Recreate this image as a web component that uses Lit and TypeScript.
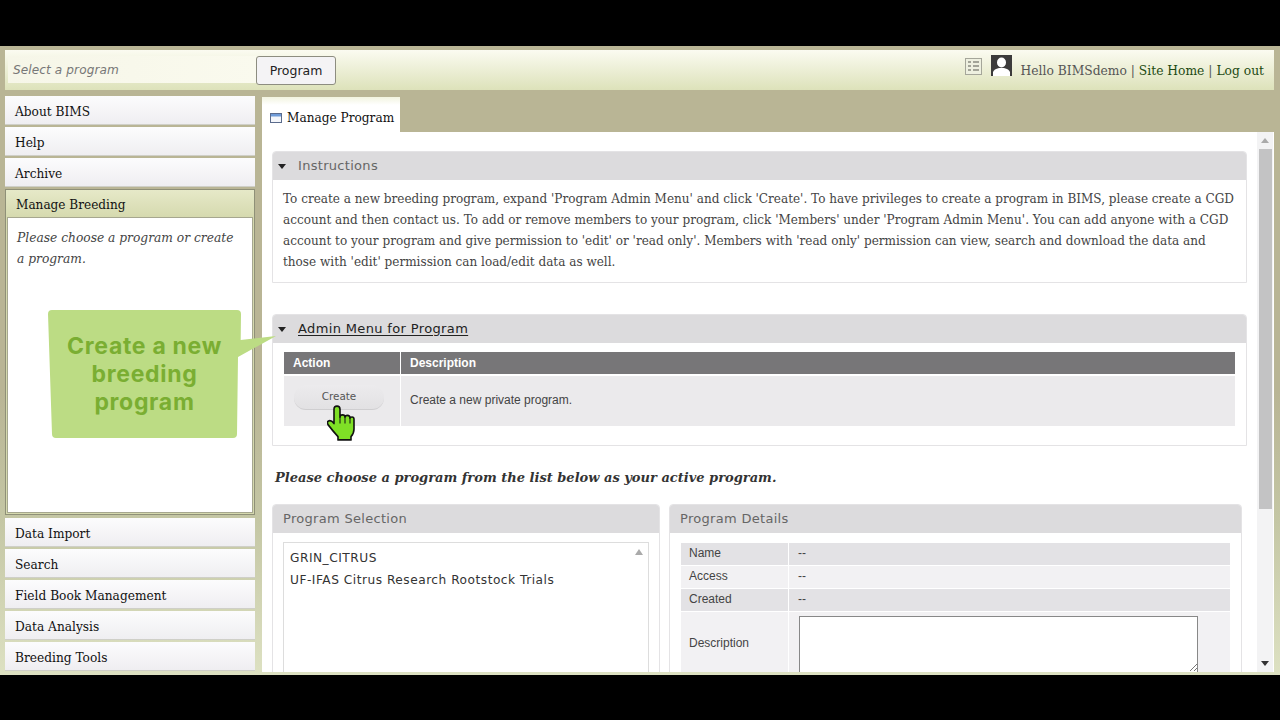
import { LitElement, html, css } from "lit";
import { customElement } from "lit/decorators.js";

const SERIF = css`"DejaVu Serif", "Liberation Serif", serif`;

@customElement("app-root")
export class AppRoot extends LitElement {
  static styles = css`
    :host { display: block; width: 1280px; height: 720px; background: #000; overflow: hidden; position: relative; font-family: ${SERIF}; }
    * { box-sizing: border-box; }
    .frame { margin-top: 46px; height: 629px; width: 1280px; background: linear-gradient(#b9b595 0, #b9b595 55%, #c4c6a4 75%, #dde1c2 100%); display: flex; flex-direction: column; padding: 4px 6px 3px 5px; }
    .top { height: 40px; flex: none; background: linear-gradient(#fbfbf1, #dde2ba); display: flex; align-items: center; position: relative; padding-left: 3px; }
    .select { width: 248px; height: 27px; margin-top: -1px; background: linear-gradient(90deg, #f6f6e8, #fafaee); color: #777; font: italic 12.1px "DejaVu Sans", sans-serif; padding: 7px 5px 0; letter-spacing: .1px; }
    .pbtn { width: 80px; height: 29px; background: #f4f3f5; border: 1px solid #8d8d80; border-radius: 3px; color: #222; font: 12.5px "DejaVu Sans", sans-serif; display: flex; align-items: center; justify-content: center; }
    .user { margin-left: auto; display: flex; align-items: flex-end; padding-right: 10px; height: 100%; padding-bottom: 12px; font-size: 12.3px; color: #555; white-space: pre; }
    .user a { color: #1d4a12; }
    .user .ic1 { margin: 8px 9px 0 0; align-self: flex-start; }
    .user .ic2 { margin: 5px 9px 0 0; align-self: flex-start; }
    .cols { flex: 1; min-height: 0; display: flex; margin-top: 6px; }
    .side { width: 250px; flex: none; display: flex; flex-direction: column; gap: 2px; overflow: hidden; }
    .item { height: 29px; flex: none; background: linear-gradient(#fcfcfd, #efeef1); border-bottom: 1px solid #cfcfc8; padding: 9px 0 0 10px; font-size: 12.2px; color: #111; white-space: nowrap; }
    .open { height: 326px; flex: none; background: linear-gradient(#e6e9c8 0, #d5d9ae 28px); border: 1px solid #8f9078; display: flex; flex-direction: column; padding: 0 1px 1px; margin-bottom: 1px; }
    .open .h { height: 27px; padding: 8px 0 0 9px; font-size: 12.1px; color: #111; }
    .open .b { flex: 1; background: #fff; border: 1px solid #a6a78f; padding: 10px 9px; font-style: italic; font-size: 12.25px; line-height: 21px; color: #444; }
    .main { flex: 1; min-width: 0; margin-left: 7px; display: flex; flex-direction: column; }
    .tab { width: 138px; height: 35px; margin-top: 1px; flex: none; background: linear-gradient(#f2f4e0, #fff 8px); display: flex; align-items: center; gap: 5px; padding: 7px 0 0 8px; font-size: 12.15px; color: #111; white-space: nowrap; }
    .pane { flex: 1; min-height: 0; background: #fff; position: relative; display: flex; overflow: hidden; }
    .content { flex: 1; min-width: 0; padding: 19px 0 0 10px; overflow: hidden; }
    .panel { width: 975px; border: 1px solid #e4e3e5; border-radius: 4px 4px 0 0; background: #fff; }
    .phead { height: 28px; padding-bottom: 2px; background: #dcdbdd; display: flex; align-items: center; font: 13px "DejaVu Sans", sans-serif; color: #666; padding-left: 5px; letter-spacing: .3px; border-radius: 3px 3px 0 0; }
    .phead svg { margin: 2px 12px 0 0; }
    .phead.dark { color: #222; letter-spacing: .36px; }
    .phead u { text-underline-offset: 2px; }
    .instr { height: 132px; }
    .instr p { margin: 0; padding: 9px 10px; font-size: 12.06px; line-height: 21px; color: #444; white-space: nowrap; }
    .admin { height: 132px; margin-top: 31px; }
    .tbl { margin: 9px 11px 0; display: grid; grid-template-columns: 116px 1fr; gap: 2px 1px; }
    .th { background: #777678; color: #fff; font: bold 12px "Liberation Sans", sans-serif; height: 22px; padding: 4px 9px; }
    .td { background: #ebeaec; height: 50px; padding-bottom: 2px; font: 12px "Liberation Sans", sans-serif; color: #444; display: flex; align-items: center; padding-left: 9px; }
    .cbtn { width: 90px; height: 25px; margin: -6px 0 0 1px; padding-bottom: 2px; border-radius: 12px; background: linear-gradient(#ecebed, #e2e1e3); border-bottom: 1px solid #cfced0; font: 10.4px "DejaVu Sans", sans-serif; color: #555; display: flex; align-items: center; justify-content: center; }
    .choose { margin: 22px 0 0 3px; height: 20px; font-weight: bold; font-style: italic; font-size: 13.03px; color: #333; line-height: 20px; white-space: nowrap; }
    .two { display: flex; margin-top: 16px; gap: 9px; }
    .sel { width: 388px; height: 300px; }
    .det { width: 573px; height: 300px; }
    .sel .phead, .det .phead { padding-left: 10px; }
    .list { margin: 9px 10px 0; height: 200px; border: 1px solid #ddd; padding: 4px 6px; font: 12.2px/22px "DejaVu Sans", sans-serif; color: #333; position: relative; white-space: nowrap; letter-spacing: .5px; }
    .list svg { position: absolute; right: 5px; top: 6px; }
    .rows { margin: 10px 11px 0; display: grid; grid-template-columns: 107px 1fr; gap: 1px; font: 12px "Liberation Sans", sans-serif; color: #444; }
    .rows > div { height: 22px; padding: 3px 9px; }
    .rows > div:nth-child(odd) { padding-left: 8px; }
    .g1 { background: #e3e2e5; }
    .g2 { background: #f2f1f3; }
    .rows > .dv { height: 70px; padding: 4px 10px; }
    .rows > .dl { height: 70px; padding-top: 24px; }
    .ta { width: 399px; height: 58px; background: #fff; border: 1px solid #888; position: relative; }
    .ta svg { position: absolute; right: 0; bottom: 2px; }
    .scroll { width: 16px; flex: none; margin: 0 1px 0 0; background: #f3f3f4; display: flex; flex-direction: column; align-items: center; }
    .scroll .thumb { width: 13px; height: 360px; background: #c3c3c4; }
    .scroll .fill { flex: 1; }
    .scroll svg { flex: none; margin: 6px 0; }
    .callout { position: absolute; left: 48px; top: 310px; width: 228px; height: 128px; }
    .callout svg { position: absolute; left: 0; top: 0; }
    .callout div { position: absolute; left: 0; top: 22px; width: 193px; text-align: center; font: bold 23px/28px "Inter", sans-serif; letter-spacing: .7px; color: #7aae32; }
    .hand { position: absolute; left: 327px; top: 405px; }
  `;
  render() {
    const tri = html`<svg width="8" height="5" viewBox="0 0 8 5"><path d="M0 0h8L4 5z" fill="#222"/></svg>`;
    return html`
      <div class="frame">
        <div class="top">
          <div class="select">Select a program</div>
          <div class="pbtn">Program</div>
          <div class="user">
            <svg class="ic1" width="17" height="17" viewBox="0 0 17 17"><rect x=".5" y=".5" width="16" height="16" fill="#eef0e0" stroke="#a5a69a"/><path d="M3 4h3M8 4h6M3 8h3M8 8h6M3 12h3M8 12h6" stroke="#8a8a80" stroke-width="1.500"/></svg>
            <svg class="ic2" width="21" height="21" viewBox="0 0 21 21"><rect width="21" height="21" fill="#3c3b3b"/><ellipse cx="10.5" cy="7.5" rx="4.5" ry="5" fill="#fff"/><path d="M2 21v-4q1-3 6-4h5q5 1 6 4v4z" fill="#fff"/></svg>
            <span>Hello BIMSdemo | <a>Site Home</a> | <a>Log out</a></span>
          </div>
        </div>
        <div class="cols">
          <div class="side">
            <div class="item">About BIMS</div>
            <div class="item">Help</div>
            <div class="item">Archive</div>
            <div class="open">
              <div class="h">Manage Breeding</div>
              <div class="b">Please choose a program or create a program.</div>
            </div>
            <div class="item">Data Import</div>
            <div class="item">Search</div>
            <div class="item">Field Book Management</div>
            <div class="item">Data Analysis</div>
            <div class="item">Breeding Tools</div>
          </div>
          <div class="main">
            <div class="tab">
              <svg width="12" height="10" viewBox="0 0 12 10"><rect x=".5" y=".5" width="11" height="9" fill="#f4f6fa" stroke="#5a6b8c"/><rect x="1" y="1" width="10" height="2.5" fill="#6f9bd8"/></svg>
              Manage Program
            </div>
            <div class="pane">
              <div class="content">
                <div class="panel instr">
                  <div class="phead">${tri}Instructions</div>
                  <p>To create a new breeding program, expand 'Program Admin Menu' and click 'Create'. To have privileges to create a program in BIMS, please create a CGD<br>account and then contact us. To add or remove members to your program, click 'Members' under 'Program Admin Menu'. You can add anyone with a CGD<br>account to your program and give permission to 'edit' or 'read only'. Members with 'read only' permission can view, search and download the data and<br>those with 'edit' permission can load/edit data as well.</p>
                </div>
                <div class="panel admin">
                  <div class="phead dark">${tri}<u>Admin Menu for Program</u></div>
                  <div class="tbl">
                    <div class="th">Action</div><div class="th">Description</div>
                    <div class="td"><div class="cbtn">Create</div></div><div class="td">Create a new private program.</div>
                  </div>
                </div>
                <div class="choose">Please choose a program from the list below as your active program.</div>
                <div class="two">
                  <div class="panel sel">
                    <div class="phead">Program Selection</div>
                    <div class="list">GRIN_CITRUS<br>UF-IFAS Citrus Research Rootstock Trials
                      <svg width="8" height="6" viewBox="0 0 8 6"><path d="M0 6h8L4 0z" fill="#aaa"/></svg>
                    </div>
                  </div>
                  <div class="panel det">
                    <div class="phead">Program Details</div>
                    <div class="rows">
                      <div class="g1">Name</div><div class="g1">--</div>
                      <div class="g2">Access</div><div class="g2">--</div>
                      <div class="g1">Created</div><div class="g1">--</div>
                      <div class="g2 dl">Description</div>
                      <div class="g2 dv"><div class="ta"><svg width="8" height="8" viewBox="0 0 8 8"><path d="M1 8l7-7M5 8l3-3" stroke="#777"/></svg></div></div>
                    </div>
                  </div>
                </div>
              </div>
              <div class="scroll">
                <svg width="8" height="5" viewBox="0 0 8 5"><path d="M0 5h8L4 0z" fill="#aaa"/></svg>
                <div class="thumb"></div>
                <div class="fill"></div>
                <svg width="8" height="5" viewBox="0 0 8 5"><path d="M0 0h8L4 5z" fill="#333"/></svg>
              </div>
            </div>
          </div>
        </div>
      </div>
      <div class="callout">
        <svg width="228" height="128" viewBox="0 0 228 128"><path d="M4 0H189q4 0 4 4L192.7 30 228 26 190 47 189 124q0 4-4 4H8q-4 0-4-4L0 4q0-4 4-4z" fill="#bcdc84"/></svg>
        <div>Create a new<br>breeding<br>program</div>
      </div>
      <svg class="hand" width="28" height="36" viewBox="-1 -1 28 33" preserveAspectRatio="none"><path d="M6 3Q6 0 9 0t3 3V10q0-2 2.500-2T17 10q0-1.500 2.500-1.500T22 11q0-1 2-1t2 2V21q0 4-3 7v3H10V28Q5 23 0 17q-1.500-3 1-3.500T6 16z" fill="#7fe026" stroke="#111" stroke-width="1.6" stroke-linejoin="round"/><path d="M12 10v6M17 10v6M22 11v5" stroke="#111" fill="none"/></svg>
    `;
  }
}
